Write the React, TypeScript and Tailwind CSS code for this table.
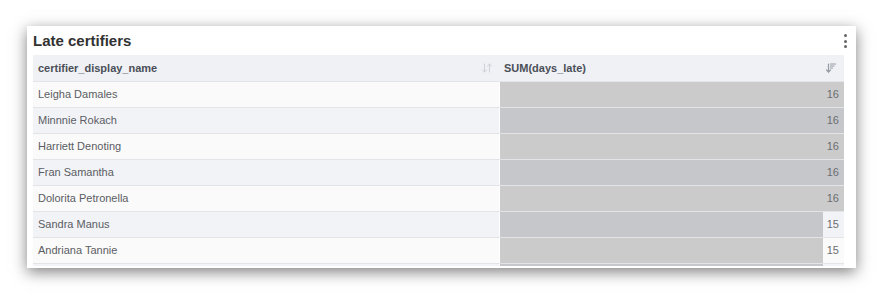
import { ArrowDownUp, ArrowDownWideNarrow } from "lucide-react";

const rows = [
  { name: "Leigha Damales", days: 16 },
  { name: "Minnnie Rokach", days: 16 },
  { name: "Harriett Denoting", days: 16 },
  { name: "Fran Samantha", days: 16 },
  { name: "Dolorita Petronella", days: 16 },
  { name: "Sandra Manus", days: 15 },
  { name: "Andriana Tannie", days: 15 },
  { name: "", days: 15 },
];

const max = 16;

export default function App() {
  return (
    <div className="min-h-[293px] w-[881px] bg-white pl-[27px] pt-[26px] font-['Liberation_Sans',Arial,sans-serif]">
      <div className="relative h-[242px] w-[829px] overflow-hidden bg-white px-[6px] shadow-[0_4px_14px_rgba(0,0,0,0.5)]">
        <div className="flex h-[29px] items-center justify-between">
          <h2 className="text-[15px] leading-none font-bold text-[#323232]">
            Late certifiers
          </h2>
          <div className="mr-[3px] mt-[1px] flex flex-col gap-[2.5px]">
            <span className="block h-[3px] w-[3px] rounded-full bg-[#666]" />
            <span className="block h-[3px] w-[3px] rounded-full bg-[#666]" />
            <span className="block h-[3px] w-[3px] rounded-full bg-[#666]" />
          </div>
        </div>

        <div className="h-[211px] w-[811px] overflow-hidden">
          <div className="flex h-[27px] border-b border-[#e2e4e8] bg-[#eff1f5] text-[11px] font-bold text-[#4b4f58]">
            <div className="flex w-[466px] items-center justify-between pl-[5px] pr-[6px]">
              <span>certifier_display_name</span>
              <ArrowDownUp size={12} strokeWidth={2} className="text-[#cdd0d5]" />
            </div>
            <div className="flex flex-1 items-center justify-between pl-[5px] pr-[7px]">
              <span>SUM(days_late)</span>
              <ArrowDownWideNarrow size={12} strokeWidth={2.4} className="text-[#959aa3]" />
            </div>
          </div>

          {rows.map((r, i) => {
            const even = i % 2 === 1;
            return (
              <div
                key={i}
                className={`flex h-[26px] border-b border-[#e3e4e7] text-[11px] ${
                  even ? "bg-[#f2f3f7]" : "bg-[#fafafa]"
                }`}
              >
                <div className="flex w-[466px] items-center pl-[5px] text-[#5a5d63]">
                  {r.name}
                </div>
                <div className="relative flex flex-1 items-center justify-end border-l border-white pr-[5px] text-[#6b6d71]">
                  <div
                    className={`absolute inset-y-0 left-0 ${
                      even ? "bg-[#c6c7cb]" : "bg-[#cbcbcb]"
                    }`}
                    style={{ width: `${(r.days / max) * 100}%` }}
                  />
                  {r.name && <span className="relative">{r.days}</span>}
                </div>
              </div>
            );
          })}
        </div>
      </div>
    </div>
  );
}
